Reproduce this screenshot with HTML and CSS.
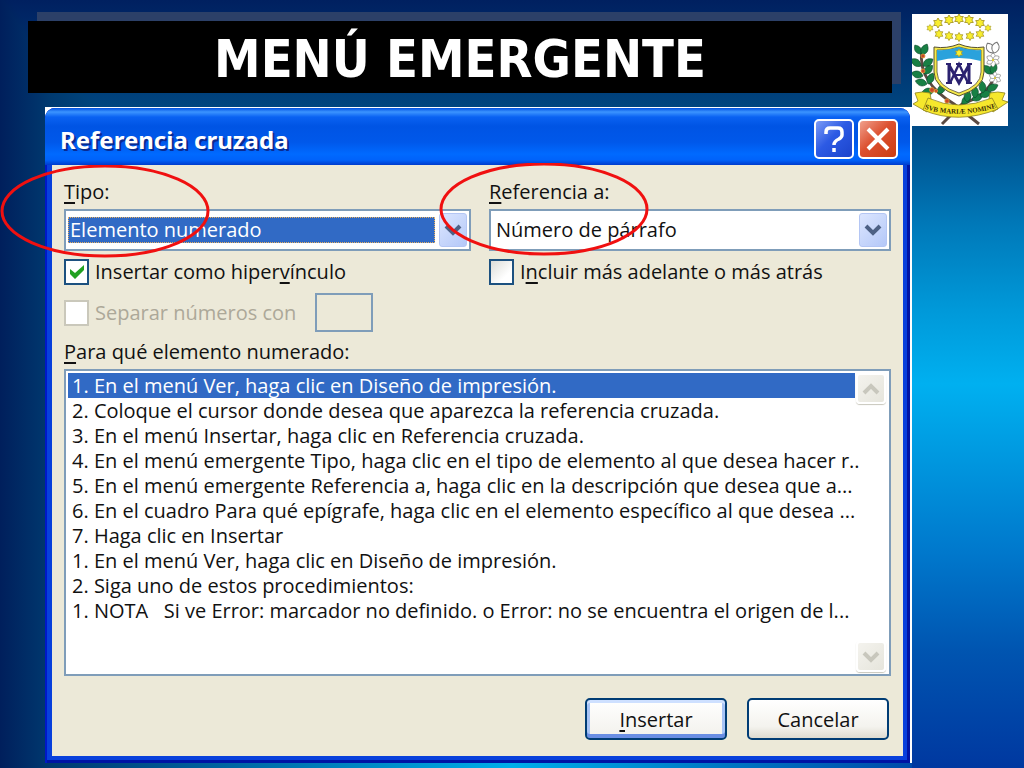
FILE: index.html
```
<!DOCTYPE html>
<html lang="es">
<head>
    <meta charset="UTF-8">
    <meta name="viewport" content="width=device-width, initial-scale=1.0">
    <title>Menú emergente</title>
    <link rel="stylesheet" href="styles.css">
</head>
<body>
    <div class="slide">
        <main class="slide-main">
            <h1 class="banner">MENÚ EMERGENTE</h1>

            <div class="frame">
                <form class="dialog">
                    <div class="titlebar">
                        <h2>Referencia cruzada</h2>
                        <button type="button" class="title-btn help" aria-label="Ayuda">
                            <svg width="26" height="30" viewBox="0 0 26 30" fill="none" stroke="#fff" stroke-width="3.5"><path d="M5 10V8Q5 4 9 4H17Q21 4 21 8V11Q21 13 18 15Q13 17 13 21"/><path d="M13 24V28"/></svg>
                        </button>
                        <button type="button" class="title-btn close" aria-label="Cerrar">
                            <svg width="26" height="26" viewBox="0 0 26 26" fill="none" stroke="#fff" stroke-width="4"><path d="M3 3L23 23M23 3L3 23"/></svg>
                        </button>
                    </div>

                    <div class="dialog-body">
                        <div class="fields">
                            <div class="field">
                                <label for="tipo"><u>T</u>ipo:</label>
                                <div class="combo">
                                    <select id="tipo" class="focused">
                                        <option>Elemento numerado</option>
                                    </select>
                                    <span class="combo-arrow"><svg width="18" height="12" viewBox="0 0 18 12" fill="none" stroke="#4d6185" stroke-width="4"><path d="M2 2L9 9L16 2"/></svg></span>
                                </div>
                                <svg class="mark mark-tipo" viewBox="0 0 210 93"><ellipse cx="105" cy="46" rx="103" ry="45"/></svg>
                            </div>
                            <div class="field">
                                <label for="referencia"><u>R</u>eferencia a:</label>
                                <div class="combo">
                                    <select id="referencia">
                                        <option>Número de párrafo</option>
                                    </select>
                                    <span class="combo-arrow"><svg width="18" height="12" viewBox="0 0 18 12" fill="none" stroke="#4d6185" stroke-width="4"><path d="M2 2L9 9L16 2"/></svg></span>
                                </div>
                                <svg class="mark mark-ref" viewBox="0 0 210 93"><ellipse cx="105" cy="46" rx="103" ry="45"/></svg>
                            </div>
                            <label class="check">
                                <input type="checkbox" checked>
                                <svg class="tick" width="14" height="14" viewBox="0 0 14 14"><path d="M0 4L5 8L14 0V5L5 14L0 9Z" fill="#21a121"/></svg>
                                <span>Insertar como hiper<u>v</u>ínculo</span>
                            </label>
                            <label class="check">
                                <input type="checkbox">
                                <span>I<u>n</u>cluir más adelante o más atrás</span>
                            </label>
                        </div>

                        <div class="separator-row">
                            <label class="check disabled">
                                <input type="checkbox" disabled>
                                <span>Separar números con</span>
                            </label>
                            <input type="text" class="separator" aria-label="Separador" disabled>
                        </div>

                        <div class="list-label" id="lista"><u>P</u>ara qué elemento numerado:</div>
                        <div class="listbox">
                            <ul role="listbox" aria-labelledby="lista">
                                <li role="option" aria-selected="true" class="selected">1. En el menú Ver, haga clic en Diseño de impresión.</li>
                                <li role="option">2. Coloque el cursor donde desea que aparezca la referencia cruzada.</li>
                                <li role="option">3. En el menú Insertar, haga clic en Referencia cruzada.</li>
                                <li role="option">4. En el menú emergente Tipo, haga clic en el tipo de elemento al que desea hacer r..</li>
                                <li role="option">5. En el menú emergente Referencia a, haga clic en la descripción que desea que a...</li>
                                <li role="option">6. En el cuadro Para qué epígrafe, haga clic en el elemento específico al que desea ...</li>
                                <li role="option">7. Haga clic en Insertar</li>
                                <li role="option">1. En el menú Ver, haga clic en Diseño de impresión.</li>
                                <li role="option">2. Siga uno de estos procedimientos:</li>
                                <li role="option">1. NOTA   Si ve Error: marcador no definido. o Error: no se encuentra el origen de l...</li>
                            </ul>
                            <div class="scrollbar">
                                <button type="button" aria-label="Subir"><svg width="18" height="12" viewBox="0 0 18 12" fill="none" stroke="#c8c7bd" stroke-width="4"><path d="M2 10L9 3L16 10"/></svg></button>
                                <button type="button" aria-label="Bajar"><svg width="18" height="12" viewBox="0 0 18 12" fill="none" stroke="#c8c7bd" stroke-width="4"><path d="M2 2L9 9L16 2"/></svg></button>
                            </div>
                        </div>

                        <div class="actions">
                            <button type="button" class="btn btn-default"><u>I</u>nsertar</button>
                            <button type="button" class="btn">Cancelar</button>
                        </div>
                    </div>
                </form>
            </div>
        </main>

        <aside class="side">
            <svg class="emblem" viewBox="0 0 96 112" role="img" aria-label="Escudo">
                <defs>
                    <path id="star" d="M0 -5L1.5 -2.5L4.3 -2.5L2.9 0L4.3 2.5L1.5 2.5L0 5L-1.5 2.5L-4.3 2.5L-2.9 0L-4.3 -2.5L-1.5 -2.5Z" fill="#f8ee2e" stroke="#a89a28" stroke-width=".9"/>
                    <path id="leaf" d="M0 0C-5 -3 -5 -8 -1 -12C4 -8 4 -4 0 0Z" fill="#188044" stroke="#0c4a2c" stroke-width=".6"/>
                    <path id="petal" d="M0 0C-3 -2 -3 -5 0 -7C3 -5 3 -2 0 0Z" fill="#fff" stroke="#777" stroke-width=".6"/>
                    <g id="flower">
                        <use href="#petal"/>
                        <use href="#petal" transform="rotate(60)"/>
                        <use href="#petal" transform="rotate(120)"/>
                        <use href="#petal" transform="rotate(180)"/>
                        <use href="#petal" transform="rotate(240)"/>
                        <use href="#petal" transform="rotate(300)"/>
                        <circle r="1.2" fill="#e3cf3a"/>
                    </g>
                    <path id="motto" d="M13 95Q46 105 84 94"/>
                </defs>
                <rect width="96" height="112" fill="#fff"/>

                <!-- crown of stars -->
                <use href="#star" x="26" y="9"/>
                <use href="#star" x="37" y="6"/>
                <use href="#star" x="47" y="5"/>
                <use href="#star" x="57" y="6"/>
                <use href="#star" x="68" y="9"/>
                <use href="#star" transform="translate(76 14) scale(.7)"/>
                <use href="#star" transform="translate(68 20) scale(.9)"/>
                <use href="#star" transform="translate(58 22) scale(.9)"/>
                <use href="#star" transform="translate(47 23) scale(.9)"/>
                <use href="#star" transform="translate(37 22) scale(.9)"/>
                <use href="#star" transform="translate(27 20) scale(.9)"/>
                <use href="#star" transform="translate(18 14) scale(.7)"/>

                <!-- crossed branches -->
                <g fill="none" stroke="#5b4a42" stroke-width="3">
                    <path d="M10 36C6 60 22 78 42 90L67 110"/>
                    <path d="M82 64C76 78 62 86 50 90L30 110"/>
                </g>
                <use href="#leaf" transform="translate(9 40) rotate(-30) scale(.9)"/>
                <use href="#leaf" transform="translate(10 41) rotate(30)"/>
                <use href="#leaf" transform="translate(9 52) rotate(-50)"/>
                <use href="#leaf" transform="translate(11 52) rotate(60)"/>
                <use href="#leaf" transform="translate(11 62) rotate(-70)"/>
                <use href="#leaf" transform="translate(12 60) rotate(50)"/>
                <use href="#leaf" transform="translate(15 70) rotate(-70)"/>
                <use href="#leaf" transform="translate(16 70) rotate(30)"/>
                <use href="#leaf" transform="translate(22 77) rotate(-90)"/>
                <use href="#leaf" transform="translate(26 80) rotate(40)"/>
                <use href="#leaf" transform="translate(50 90) rotate(50)"/>
                <use href="#leaf" transform="translate(55 88) rotate(10)"/>
                <use href="#leaf" transform="translate(60 86) rotate(70)"/>
                <use href="#leaf" transform="translate(63 84) rotate(5)"/>
                <use href="#leaf" transform="translate(68 82) rotate(75)"/>
                <use href="#leaf" transform="translate(71 79) rotate(0)"/>
                <use href="#leaf" transform="translate(75 76) rotate(70)"/>
                <use href="#leaf" transform="translate(80 60) rotate(-40)"/>
                <use href="#leaf" transform="translate(80 60) rotate(20)"/>
                <g fill="#c8452c" stroke="#e0a030" stroke-width=".8">
                    <circle cx="11" cy="42" r="2"/>
                    <circle cx="11" cy="57" r="2"/>
                    <circle cx="20" cy="76" r="2.4"/>
                    <circle cx="24" cy="77" r="1.6"/>
                    <circle cx="35" cy="87" r="2.2"/>
                </g>
                <use href="#flower" transform="translate(81 46)"/>
                <use href="#flower" transform="translate(83 64) scale(.9)"/>
                <use href="#petal" transform="translate(81 39) rotate(-30) scale(1.6)"/>
                <use href="#petal" transform="translate(82 39) rotate(15) scale(1.6)"/>

                <!-- shield -->
                <path d="M22 33Q35 35 47 30Q59 35 72 33V58Q72 74 47 82Q22 74 22 58Z" fill="#f6ea4a" stroke="#575130"/>
                <path d="M25 36Q36 37 47 33Q58 37 69 36V58Q69 72 47 79Q25 72 25 58Z" fill="#fff" stroke="#575130" stroke-width=".8"/>
                <path d="M25 36Q36 37 47 33Q58 37 69 36V47Q47 41 25 47Z" fill="#2aa2dc"/>
                <use href="#star" transform="translate(47 39) scale(.8)"/>
                <!-- interlaced strokes and crossbar -->
                <g fill="none" stroke="#2b2270">
                    <path d="M37 51V69M57 51V69M37 51L47 69L57 51" stroke-width="3"/>
                    <path d="M38 69L47 50L56 69" stroke-width="2.4"/>
                    <path d="M41 61H53M34 69H40M54 69H60M34 50H39M55 50H60M44 50H50" stroke-width="1.8"/>
                </g>

                <!-- ribbon -->
                <g fill="#f6e72c" stroke="#8d8220" stroke-width=".8">
                    <path d="M3 79Q10 77 18 79L20 91L15 98L1 90L6 87Z"/>
                    <path d="M93 79Q86 77 78 79L76 91L81 98L96 88L90 86Z"/>
                    <path d="M16 84Q46 98 80 84L86 95Q46 111 11 96Z"/>
                </g>
                <text class="motto"><textPath href="#motto" startOffset="50%">SVB MARIÆ NOMINE</textPath></text>
            </svg>
        </aside>
    </div>
</body>
</html>
```
FILE: styles.css
```
* {
    margin: 0;
    padding: 0;
    box-sizing: border-box;
}

body {
    font-family: "Open Sans", "Noto Sans", sans-serif;
    font-size: 20px;
    color: #111;
}

.slide {
    display: flex;
    min-height: 100vh;
    background:
        linear-gradient(to right, #001f5c 0%, #003a70 5%, #005a96 18%, #00aeea 50%, #0078c4 70%, #0048a8 90%, #0038a0 100%),
        linear-gradient(to bottom, #002060 0, #004680 110px, #00b0f0 370px);
    background-blend-mode: darken;
}

.slide-main {
    flex: 1;
    min-width: 0;
    display: flex;
    flex-direction: column;
}

.banner {
    margin: 21px 20px 14px 28px;
    padding-top: 4px;
    background: #000;
    color: #fff;
    font-family: "DejaVu Sans Condensed", "DejaVu Sans", sans-serif;
    font-size: 52px;
    font-weight: bold;
    line-height: 68px;
    text-align: center;
    box-shadow: 9px -9px 0 #2c4068;
}

.side {
    width: 112px;
    padding-top: 14px;
    background: linear-gradient(to bottom, #002060 0%, #004c88 17%, #0078b8 29%, #0098d8 40%, #00b0f0 50%, #009ce2 58%, #0078cc 72%, #0054b0 85%, #0038a0 100%);
}

.emblem {
    display: block;
    width: 96px;
    height: 112px;
}

.motto {
    font-family: "Liberation Serif", serif;
    font-size: 7px;
    font-weight: bold;
    text-anchor: middle;
    fill: #3a3008;
}

/* dialog window */
.frame {
    margin: 0 0 5px 45px;
    padding: 1px 2px 0 0;
    flex: 1;
    display: flex;
    background: #fff;
}

.dialog {
    flex: 1;
    min-width: 0;
    display: flex;
    flex-direction: column;
    padding: 0 7px 7px;
    border-radius: 10px 10px 0 0;
    background: #0840dc;
    box-shadow: inset 2px 0 0 #0018c8, inset -3px -3px 0 #0014a4;
}

.titlebar {
    display: flex;
    align-items: center;
    gap: 4px;
    height: 57px;
    margin: 0 -7px;
    padding: 5px 12px 0 15px;
    border-radius: 10px 10px 0 0;
    background: linear-gradient(to bottom, #0050e0 0, #3c94ff 4px, #0a62f2 9px, #0054e4 18px, #0058ea 34px, #006aff 46px, #0062fa 52px, #003ccc 57px);
}

.titlebar h2 {
    flex: 1;
    font-family: "Noto Sans", sans-serif;
    font-size: 24px;
    color: #fff;
    text-shadow: 2px 2px 0 #0a2a90;
}

.title-btn {
    display: flex;
    align-items: center;
    justify-content: center;
    width: 40px;
    height: 40px;
    border: 2px solid #fff;
    border-radius: 5px;
}

.help {
    background: linear-gradient(135deg, #7c9cf6, #2c5ae4 45%, #1c44cc);
}

.close {
    background: linear-gradient(135deg, #f0a08c, #dc5030 45%, #cc3c10);
}

.dialog-body {
    flex: 1;
    padding: 14px 12px 15px;
    background: #ece9d8;
}

.fields {
    display: grid;
    grid-template-columns: 407fr 402fr;
    column-gap: 18px;
    row-gap: 8px;
}

.field {
    position: relative;
}

.field label,
.list-label {
    display: block;
    margin-bottom: 4px;
    line-height: 26px;
}

u {
    text-underline-offset: 3px;
    text-decoration-thickness: 2px;
}

.combo {
    display: flex;
    align-items: center;
    gap: 4px;
    height: 42px;
    padding: 2px;
    border: 2px solid #7f9db9;
    background: #fff;
}

.combo select {
    flex: 1;
    min-width: 0;
    height: 26px;
    padding: 0 2px;
    border: 1px solid transparent;
    appearance: none;
    background: #fff;
    color: #111;
    font: inherit;
    line-height: 24px;
    outline: none;
}

.combo select.focused {
    padding: 0 1px;
    border: 1px dotted #e8b060;
    background: #316ac5;
    color: #fff;
}

.combo-arrow {
    display: flex;
    align-items: center;
    justify-content: center;
    width: 28px;
    height: 34px;
    border: 1px solid #b4c6f4;
    border-radius: 3px;
    background: linear-gradient(135deg, #dce6ff, #b4c8f8);
}

/* red circles drawn over the fields */
.mark {
    position: absolute;
    width: 210px;
    height: 93px;
    fill: none;
    stroke: #f01010;
    stroke-width: 3;
    pointer-events: none;
}

.mark-tipo {
    left: -64px;
    top: -14px;
}

.mark-ref {
    left: -50px;
    top: -16px;
}

.check {
    position: relative;
    display: flex;
    align-items: center;
    gap: 6px;
    line-height: 26px;
}

.check input {
    width: 25px;
    height: 26px;
    appearance: none;
    border: 2px solid #1c5180;
    background: linear-gradient(135deg, #dcdcd7, #fff 70%);
}

.check input:checked {
    background: #fff;
}

.tick {
    position: absolute;
    left: 6px;
    top: 6px;
}

.separator-row {
    display: flex;
    align-items: center;
    gap: 19px;
    margin: 8px 0 7px;
}

.check.disabled {
    color: #aca899;
}

.check.disabled input {
    border-color: #cac8bb;
    background: #fff;
}

.separator {
    width: 58px;
    height: 39px;
    border: 2px solid #7f9db9;
    background: #ece9d8;
}

.listbox {
    display: flex;
    height: 307px;
    padding: 2px;
    border: 2px solid #7f9db9;
    background: #fff;
}

.listbox ul {
    flex: 1;
    min-width: 0;
    list-style: none;
}

.listbox li {
    padding-left: 4px;
    line-height: 25px;
    white-space: pre;
}

.listbox .selected {
    background: #316ac5;
    color: #fff;
}

.scrollbar {
    display: flex;
    flex-direction: column;
    justify-content: space-between;
    width: 32px;
    padding-left: 1px;
}

.scrollbar button {
    display: flex;
    align-items: center;
    justify-content: center;
    width: 30px;
    height: 31px;
    border: 2px solid #fff;
    border-radius: 4px;
    background: linear-gradient(135deg, #f4f3ee, #e6e5dc);
    box-shadow: 0 1px 1px #c8c7bc;
}

.actions {
    display: flex;
    justify-content: flex-end;
    gap: 20px;
    margin-top: 22px;
    padding-right: 2px;
}

.btn {
    width: 142px;
    height: 42px;
    border: 2px solid #003c74;
    border-radius: 5px;
    background: linear-gradient(to bottom, #fff, #f4f3ee 70%, #dedbd0);
    color: #111;
    font: inherit;
}

.btn-default {
    background: linear-gradient(to bottom, #fff, #f2f1ec);
    box-shadow: inset 0 3px 0 #cee0ff, inset 0 -4px 0 #6a8ee4, inset 3px 0 0 #a8c4f6, inset -3px 0 0 #a8c4f6;
}
```
